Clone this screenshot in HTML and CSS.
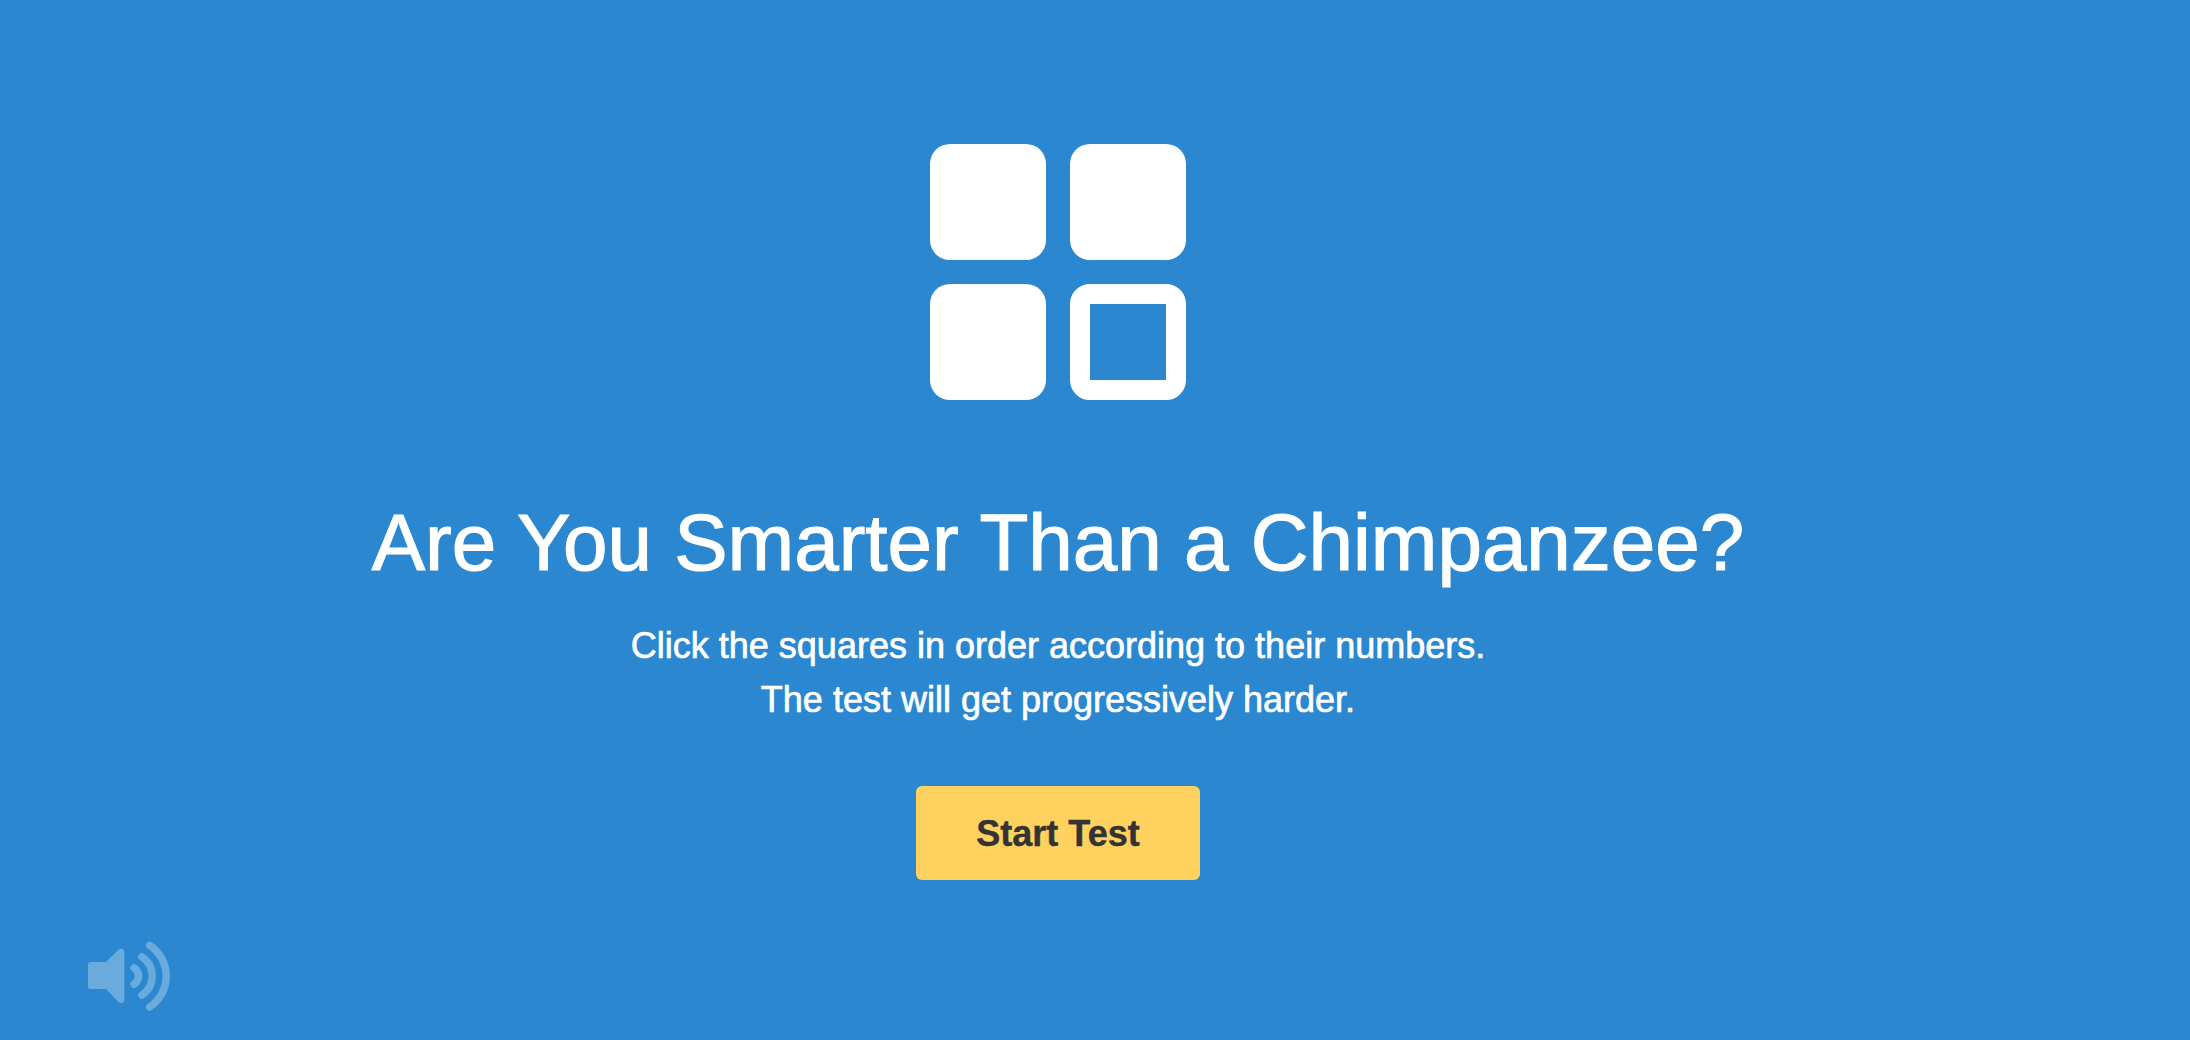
FILE: index.html
```html
<!DOCTYPE html>
<html lang="en">
<head>
  <meta charset="UTF-8" />
  <meta name="viewport" content="width=device-width, initial-scale=1" />
  <title>Chimp Test</title>
  <link rel="stylesheet" href="styles.css">
</head>
<body>
  <main class="test">
    <div class="squares">
      <div class="square"></div>
      <div class="square"></div>
      <div class="square"></div>
      <div class="square hollow"></div>
    </div>
    <h1>Are You Smarter Than a Chimpanzee?</h1>
    <p>Click the squares in order according to their numbers.<br>The test will get progressively harder.</p>
    <button class="start">Start Test</button>
  </main>
  <footer class="controls">
    <svg class="volume" viewBox="0 0 120 90" aria-label="Volume">
      <path class="speaker" d="M20.5 32H36L48.4 19.8Q50 18.5 51.6 18.8Q54.3 19.3 54.3 22.3V69.5Q54.3 72.5 51.6 73Q50 73.3 48.4 72L36 59H20.5Q18 59 18 56.5V34.5Q18 32 20.5 32Z" />
      <path class="wave" d="M64.2 37.9A9.8 9.8 0 0 1 64.2 54.1" />
      <path class="wave" d="M72 26.9A23 23 0 0 1 72 65.1" />
      <path class="wave" d="M79.7 15.4A37 37 0 0 1 79.7 77" />
    </svg>
  </footer>
</body>
</html>
```

FILE: styles.css
```css
body {
  margin: 0;
  height: 1040px;
  overflow: hidden;
  background: #2a87d0;
  color: #fff;
  font-family: Helvetica, "Liberation Sans", Arial, sans-serif;
}
.test {
  display: flex;
  flex-direction: column;
  align-items: center;
  width: 2116px;
  padding-top: 144px;
  text-align: center;
}
.squares {
  display: grid;
  grid-template-columns: 116px 116px;
  grid-auto-rows: 116px;
  gap: 24px;
}
.square {
  background: #fff;
  border-radius: 20px;
}
.hollow {
  background: none;
  border: 20px solid #fff;
}
h1 {
  margin: 83px 0 16px;
  font-size: 80px;
  font-weight: 400;
  line-height: 120px;
  white-space: nowrap;
  -webkit-text-stroke: 1.2px #fff;
}
p {
  margin: 0 0 59px;
  font-size: 36px;
  line-height: 54px;
  -webkit-text-stroke: 0.7px #fff;
}
.start {
  width: 284px;
  height: 94px;
  padding: 2px 0 0;
  border: none;
  border-radius: 6px;
  background: #ffd15e;
  color: #333;
  font: inherit;
  font-size: 36px;
  font-weight: 700;
  line-height: 54px;
  -webkit-text-stroke: 0.4px #333;
  cursor: pointer;
}
.controls {
  display: flex;
  padding: 50px 0 0 70px;
}
.volume {
  width: 120px;
  height: 90px;
  opacity: 0.3;
}
.speaker { fill: #fff; }
.wave {
  fill: none;
  stroke: #fff;
  stroke-width: 7.5;
  stroke-linecap: round;
}
```
